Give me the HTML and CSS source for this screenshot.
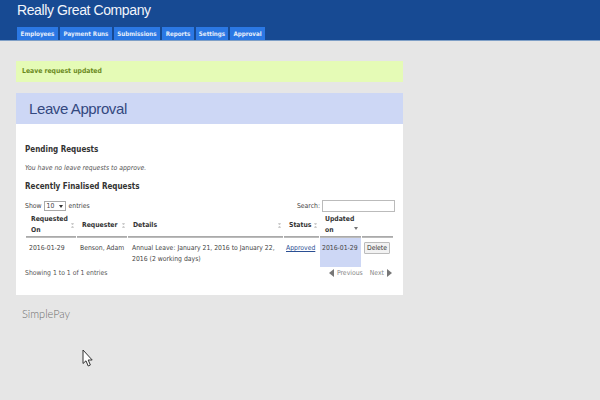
FILE: index.html
```html
<!DOCTYPE html>
<html lang="en">
<head>
    <meta charset="UTF-8">
    <title>Leave Approval</title>
    <link rel="stylesheet" href="styles.css">
</head>
<body>
    <header class="topbar">
        <div class="company">Really Great Company</div>
        <nav class="tabs">
            <a class="tab">Employees</a>
            <a class="tab">Payment Runs</a>
            <a class="tab">Submissions</a>
            <a class="tab">Reports</a>
            <a class="tab">Settings</a>
            <a class="tab">Approval</a>
        </nav>
    </header>

    <main class="content">
        <div class="flash">Leave request updated</div>

        <section class="panel">
            <h1 class="panel-title">Leave Approval</h1>
            <div class="panel-body">
                <h2 class="section-title first">Pending Requests</h2>
                <p class="empty-note">You have no leave requests to approve.</p>
                <h2 class="section-title second">Recently Finalised Requests</h2>

                <div class="table-controls">
                    <div class="length">Show <span class="select">10 <span class="select-arrow"></span></span> entries</div>
                    <div class="search">Search: <span class="search-box"></span></div>
                </div>

                <table class="requests">
                    <thead>
                        <tr>
                            <th class="col-requested">Requested On<span class="sort"></span></th>
                            <th class="col-requester">Requester<span class="sort"></span></th>
                            <th class="col-details">Details<span class="sort"></span></th>
                            <th class="col-status">Status<span class="sort"></span></th>
                            <th class="col-updated">Updated on<span class="sort-down"></span></th>
                            <th class="col-action"></th>
                        </tr>
                    </thead>
                    <tbody>
                        <tr>
                            <td>2016-01-29</td>
                            <td class="nowrap">Benson, Adam</td>
                            <td class="details">Annual Leave: January 21, 2016 to January 22, 2016 (2 working days)</td>
                            <td class="tight"><a class="status-link">Approved</a></td>
                            <td class="tight sorted">2016-01-29</td>
                            <td class="tight"><span class="delete">Delete</span></td>
                        </tr>
                    </tbody>
                </table>

                <div class="table-footer">
                    <div>Showing 1 to 1 of 1 entries</div>
                    <div class="pager">
                        <span class="arrow-left"></span>
                        <span>Previous</span>
                        <span>Next</span>
                        <span class="arrow-right"></span>
                    </div>
                </div>
            </div>
        </section>

        <div class="logo">SimplePay</div>
    </main>

    <svg class="cursor" width="12" height="19" viewBox="0 0 12 19">
        <path d="M1 1 L1 14.5 L4 11.8 L6.2 17 L8.4 16 L6.2 11 L10.2 11 Z" fill="#fff" stroke="#333" stroke-width="1"/>
    </svg>
</body>
</html>
```

FILE: styles.css
```css
* {
    margin: 0;
    padding: 0;
    box-sizing: border-box;
}

body {
    height: 400px;
    overflow: hidden;
    background: #e6e6e6;
    font-family: "DejaVu Sans Condensed", "DejaVu Sans", sans-serif;
    font-stretch: condensed;
    font-size: 6.8px;
    color: #444;
    position: relative;
}

.topbar {
    height: 41px;
    background: #174a93;
    border-bottom: 1px solid #7f9fc6;
    padding: 0 17px;
}

.company {
    font-family: "Liberation Sans", sans-serif;
    font-size: 14px;
    letter-spacing: -0.4px;
    line-height: 20px;
    color: #f2f5fb;
}

.tabs {
    display: grid;
    grid-template-columns: 41px 52px 46px 32px 32px 35px;
    gap: 2px;
    margin-top: 7px;
}

.tab {
    height: 13px;
    line-height: 13px;
    text-align: center;
    white-space: nowrap;
    background: #2b78e4;
    color: #e6eefb;
    font-size: 6.2px;
    font-weight: bold;
}

.content {
    width: 387px;
    margin-left: 16px;
    padding-top: 20px;
}

.flash {
    height: 21px;
    line-height: 21px;
    padding-left: 6px;
    background: #e5fbb6;
    color: #6b8a1e;
    font-weight: bold;
}

.panel {
    margin-top: 11px;
    background: #fff;
}

.panel-title {
    height: 31px;
    line-height: 31px;
    padding-left: 13px;
    background: #cdd7f5;
    color: #33487f;
    font-family: "Liberation Sans", sans-serif;
    font-size: 15px;
    letter-spacing: -0.4px;
    font-weight: normal;
}

.panel-body {
    height: 171px;
    padding: 0 9px;
}

.section-title {
    font-size: 8px;
    font-weight: bold;
    color: #333;
    line-height: 12px;
}

.section-title.first {
    padding-top: 20px;
    height: 32px;
}

.empty-note {
    margin-top: 7px;
    line-height: 10px;
    font-style: italic;
    color: #555;
}

.section-title.second {
    margin-top: 8px;
}

.table-controls {
    display: flex;
    justify-content: space-between;
    align-items: center;
    margin-top: 7px;
    height: 12px;
}

.length {
    display: flex;
    align-items: center;
    gap: 2px;
}

.select {
    display: inline-flex;
    align-items: center;
    justify-content: space-between;
    width: 22px;
    height: 10px;
    margin-right: 1px;
    padding: 0 2px;
    border: 1px solid #aaa;
    background: #fff;
}

.select-arrow {
    border-left: 2px solid transparent;
    border-right: 2px solid transparent;
    border-top: 3px solid #333;
}

.search {
    display: flex;
    align-items: center;
    gap: 2px;
    margin-right: -1px;
}

.search-box {
    display: block;
    width: 73px;
    height: 12px;
    border: 1px solid #bbb;
    background: #fff;
}

.requests {
    width: 100%;
    border-collapse: separate;
    border-spacing: 1px 0;
    table-layout: fixed;
}

.requests th {
    position: relative;
    height: 25px;
    padding: 2px 5px 0;
    text-align: left;
    font-weight: bold;
    line-height: 11px;
    color: #333;
    border-bottom: 1px solid #aaa;
    box-shadow: 0 1px 0 #bbb;
}

.requests td {
    height: 30px;
    padding: 6px 3px 0;
    vertical-align: top;
    line-height: 11px;
}

.requests td.nowrap {
    padding-right: 0;
    white-space: nowrap;
}

.requests td.details {
    padding-left: 4px;
}

.requests td.tight {
    padding-left: 2px;
    padding-right: 2px;
}

.col-requested { width: 50px; }
.col-requester { width: 50px; }
.col-details { width: 155px; }
.col-status { width: 35px; }
.col-updated { width: 41px; }
.col-action { width: 31px; }

.requests td.sorted {
    background: #cdd7f5;
}

.sort,
.sort-down {
    position: absolute;
    right: 2px;
    top: 11px;
    border-left: 1.5px solid transparent;
    border-right: 1.5px solid transparent;
}

.sort {
    height: 5px;
    width: 3px;
    border-top: 2px solid #ccc;
    border-bottom: 2px solid #ccc;
}

.sort-down {
    top: 15px;
    right: 3px;
    border-left-width: 2px;
    border-right-width: 2px;
    border-top: 3px solid #777;
}

.status-link {
    color: #2b4f93;
    text-decoration: underline;
}

.delete {
    display: inline-block;
    width: 26px;
    height: 12px;
    margin-top: -1px;
    line-height: 10px;
    text-align: center;
    border: 1px solid #bbb;
    border-radius: 1px;
    background: #f2f2f2;
    color: #333;
}

.table-footer {
    display: flex;
    justify-content: space-between;
    align-items: center;
    margin-top: 2px;
    color: #555;
}

.pager {
    display: flex;
    align-items: center;
    gap: 3px;
    color: #888;
    padding-right: 2px;
}

.pager span:nth-child(3) {
    margin-left: 4px;
}

.arrow-left {
    border-top: 4px solid transparent;
    border-bottom: 4px solid transparent;
    border-right: 5px solid #777;
}

.arrow-right {
    border-top: 4px solid transparent;
    border-bottom: 4px solid transparent;
    border-left: 5px solid #777;
}

.logo {
    margin: 12px 0 0 6px;
    font-family: "Lato", sans-serif;
    font-weight: 300;
    font-size: 11px;
    line-height: 14px;
    color: #6f6f6f;
}

.cursor {
    position: absolute;
    left: 82px;
    top: 349px;
}
```
